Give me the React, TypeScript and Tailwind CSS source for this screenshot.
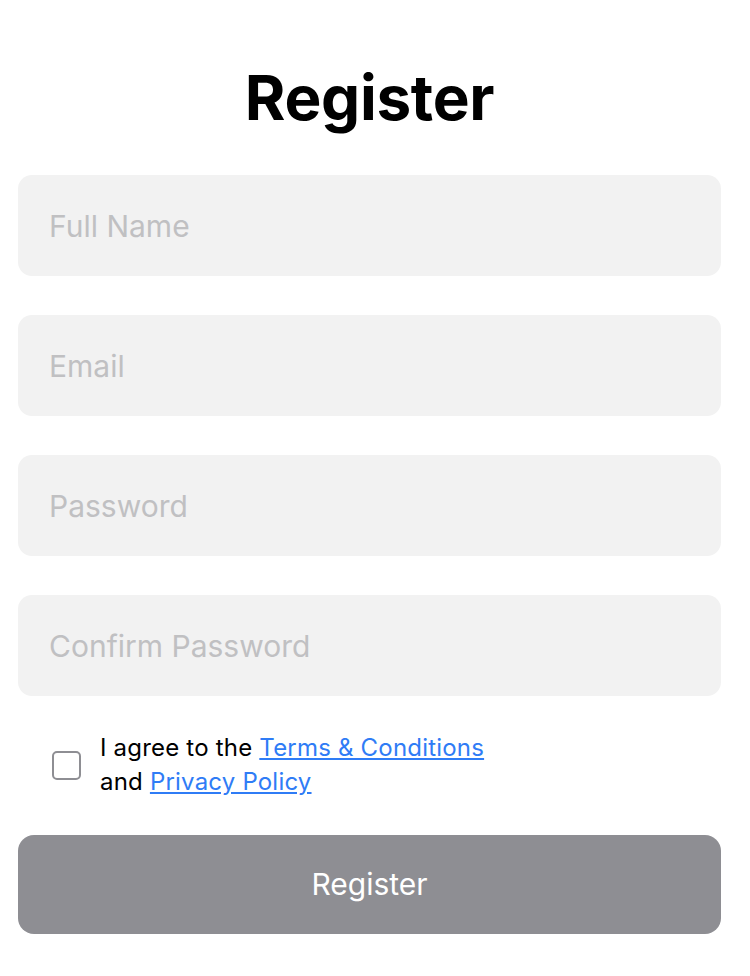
const fields = ["Full Name", "Email", "Password", "Confirm Password"];

const App = () => {
  return (
    <div className="min-h-[976px] w-[750px] bg-white font-['Inter',sans-serif]">
      <div className="w-[721px] pl-[18px] pt-[61px]">
        <h1 className="text-center text-[62px] leading-[74px] font-bold text-black tracking-[-0.3px]">Register</h1>

        <div className="mt-[40px] flex flex-col gap-[39px]">
          {fields.map((f) => (
            <input
              key={f}
              type={f.includes("Password") ? "password" : "text"}
              placeholder={f}
              className="h-[101px] w-full rounded-[14px] bg-[#f2f2f2] px-[31px] text-[30px] text-black placeholder:text-[#c0c0c2] focus:outline-none"
            />
          ))}
        </div>

        {/* Terms */}
        <div className="mt-[35px] flex items-center pl-[34px]">
          <div className="h-[29px] w-[29px] rounded-[5px] border-2 border-[#8e8e93]" />
          <p className="ml-[19px] text-[24px] leading-[34px] tracking-[0.2px] text-black">
            I agree to the <a href="#" className="text-[#2f7cf6] underline">Terms &amp; Conditions</a>
            <br />
            and <a href="#" className="text-[#2f7cf6] underline">Privacy Policy</a>
          </p>
        </div>

        <button className="mt-[36px] h-[99px] w-full rounded-[16px] bg-[#8e8e93] text-[30px] text-white">Register</button>
      </div>
    </div>
  );
};

export default App;
